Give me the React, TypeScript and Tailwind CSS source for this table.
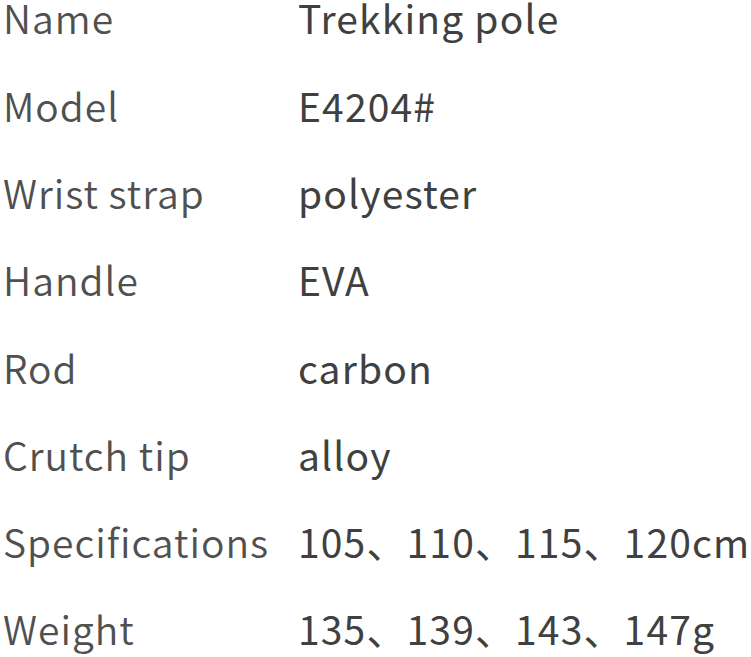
import React from "react";

const rows: [string, string][] = [
  ["Name", "Trekking pole"],
  ["Model", "E4204#"],
  ["Wrist strap", "polyester"],
  ["Handle", "EVA"],
  ["Rod", "carbon"],
  ["Crutch tip", "alloy"],
  ["Specifications", "105、110、115、120cm"],
  ["Weight", "135、139、143、147g"],
];

export default function App() {
  return (
    <div
      className="w-[751px] h-[657px] bg-white overflow-hidden"
      style={{ fontFamily: '"Noto Sans CJK SC", "Noto Sans", sans-serif' }}
    >
      <div className="grid grid-cols-[295px_1fr] pl-[3px] -mt-[26px]">
        {rows.map(([k, v]) => (
          <React.Fragment key={k}>
            <div className="h-[87.3px] flex items-center text-[39px] tracking-[1px] font-[350] text-[#505050] whitespace-nowrap">
              {k}
            </div>
            <div className="h-[87.3px] flex items-center text-[39px] tracking-[1.15px] font-normal text-[#404040] whitespace-nowrap">
              {v}
            </div>
          </React.Fragment>
        ))}
      </div>
    </div>
  );
}
